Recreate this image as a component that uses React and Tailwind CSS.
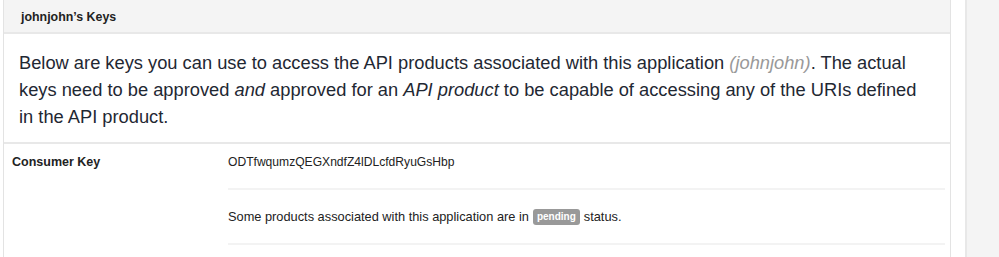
export default function App() {
  return (
    <div
      className="flex h-[257px] w-[999px] overflow-hidden bg-white text-[#333]"
      style={{ fontFamily: '"Liberation Sans", Arial, sans-serif' }}
    >
      {/* ── Keys panel ─────────────────────────────────────────────── */}
      <div className="ml-[3px] w-[948px] shrink-0 border-x border-[#e3e3e3]">
        <div className="h-[34px] border-b-2 border-[#e8e8e8] bg-[#f4f4f4] pl-[17px] pt-[8px] text-[12.4px] font-bold text-[#222]">
          johnjohn’s Keys
        </div>

        <p className="border-b-2 border-[#e8e8e8] pb-[12px] pl-[15px] pr-[30px] pt-[15px] text-[18.3px] leading-[27px] text-[#1f2833]">
          Below are keys you can use to access the API products associated with this application{' '}
          <em className="text-[#999]">(johnjohn)</em>. The actual keys need to be approved{' '}
          <em>and</em> approved for an <em>API product</em> to be capable of accessing any of the URIs
          defined in the API product.
        </p>

        <div className="flex text-[#222]">
          <div className="w-[224px] shrink-0 pl-[8px] pt-[9px] text-[12.5px] font-bold">Consumer Key</div>
          <div className="mr-[5px] flex-1">
            <div className="h-[46px] border-b-2 border-[#f3f3f3] pt-[9px] text-[12.1px]">
              ODTfwqumzQEGXndfZ4lDLcfdRyuGsHbp
            </div>
            <div className="flex h-[55px] items-center border-b-2 border-[#f3f3f3] text-[12.8px]">
              Some products associated with this application are in
              <span className="mx-[4px] rounded-[3px] bg-[#999] px-[4px] py-[1px] text-[10px] font-bold leading-[14px] text-white">
                pending
              </span>
              status.
            </div>
          </div>
        </div>
      </div>

      {/* ── Sidebar strip ──────────────────────────────────────────── */}
      <div className="ml-[14px] flex-1 border-l-2 border-[#e8e8e8] bg-[#f4f4f4]" />
    </div>
  )
}
